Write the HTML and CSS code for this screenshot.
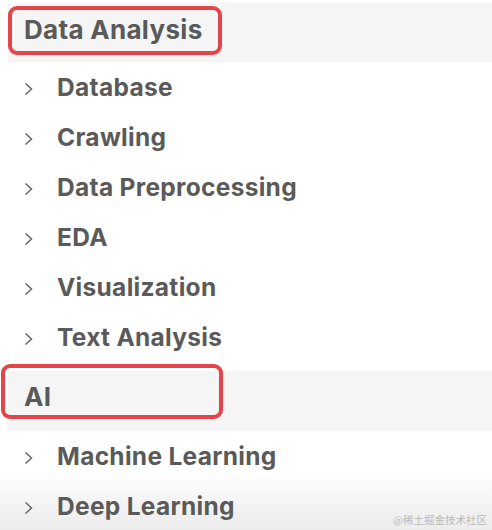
FILE: index.html
```html
<!DOCTYPE html>
<html>
<head>
<meta charset="utf-8">
<link rel="stylesheet" href="styles.css">
</head>
<body>
<div class="page">
  <section class="group">
    <div class="head"><span class="mark mark-1">Data Analysis</span></div>
    <ul class="items">
      <li><svg class="chev" viewBox="0 0 9 14"><path d="M1.5 1.5 L7.5 7 L1.5 12.5"/></svg>Database</li>
      <li><svg class="chev" viewBox="0 0 9 14"><path d="M1.5 1.5 L7.5 7 L1.5 12.5"/></svg>Crawling</li>
      <li><svg class="chev" viewBox="0 0 9 14"><path d="M1.5 1.5 L7.5 7 L1.5 12.5"/></svg>Data Preprocessing</li>
      <li><svg class="chev" viewBox="0 0 9 14"><path d="M1.5 1.5 L7.5 7 L1.5 12.5"/></svg>EDA</li>
      <li><svg class="chev" viewBox="0 0 9 14"><path d="M1.5 1.5 L7.5 7 L1.5 12.5"/></svg>Visualization</li>
      <li><svg class="chev" viewBox="0 0 9 14"><path d="M1.5 1.5 L7.5 7 L1.5 12.5"/></svg>Text Analysis</li>
    </ul>
  </section>
  <section class="group group-ai">
    <div class="head"><span class="mark mark-2">AI</span></div>
    <ul class="items">
      <li><svg class="chev" viewBox="0 0 9 14"><path d="M1.5 1.5 L7.5 7 L1.5 12.5"/></svg>Machine Learning</li>
      <li><svg class="chev" viewBox="0 0 9 14"><path d="M1.5 1.5 L7.5 7 L1.5 12.5"/></svg>Deep Learning</li>
    </ul>
  </section>
  <div class="watermark">@稀土掘金技术社区</div>
</div>
</body>
</html>
```
FILE: styles.css
```css
html, body {
  margin: 0;
  padding: 0;
  background: #ffffff;
}
.page {
  position: relative;
  width: 492px;
  height: 530px;
  overflow: hidden;
  font-family: Inter, "Noto Sans", sans-serif;
  color: #5a5a5a;
  background: linear-gradient(to bottom, #ffffff 0, #ffffff 470px, #f3f3f3 505px, #ececec 530px);
}
.group {
  padding-top: 3px;
}
.group-ai {
  padding-top: 9px;
}
.head {
  position: relative;
  margin-left: 8px;
  height: 59px;
  background: #f5f5f5;
}
.group-ai .head {
  height: 60px;
}
.mark {
  position: absolute;
  box-sizing: border-box;
  border: 4px solid #e3454b;
  border-radius: 9px;
  font-size: 26px;
  font-weight: 700;
  line-height: 1;
  letter-spacing: 0.3px;
  display: flex;
  align-items: center;
}
.mark-1 {
  left: 0;
  top: 3px;
  width: 214px;
  height: 49px;
  padding-left: 12px;
  padding-bottom: 2px;
}
.mark-2 {
  left: -7px;
  top: -7px;
  width: 222px;
  height: 55px;
  padding-left: 19px;
  padding-top: 10px;
}
.items {
  list-style: none;
  margin: 0;
  padding: 0;
}
.items li {
  height: 50px;
  display: flex;
  align-items: center;
  font-size: 24.5px;
  font-weight: 700;
  letter-spacing: 0.3px;
  padding-left: 24px;
}
.chev {
  width: 9px;
  height: 14px;
  margin-right: 24px;
  margin-top: 3px;
  flex: none;
  fill: none;
  stroke: #666666;
  stroke-width: 1.5;
}
.watermark {
  position: absolute;
  right: 5px;
  bottom: 3px;
  font-size: 10.5px;
  color: #bababa;
  font-family: "Noto Sans CJK SC", sans-serif;
}
```
